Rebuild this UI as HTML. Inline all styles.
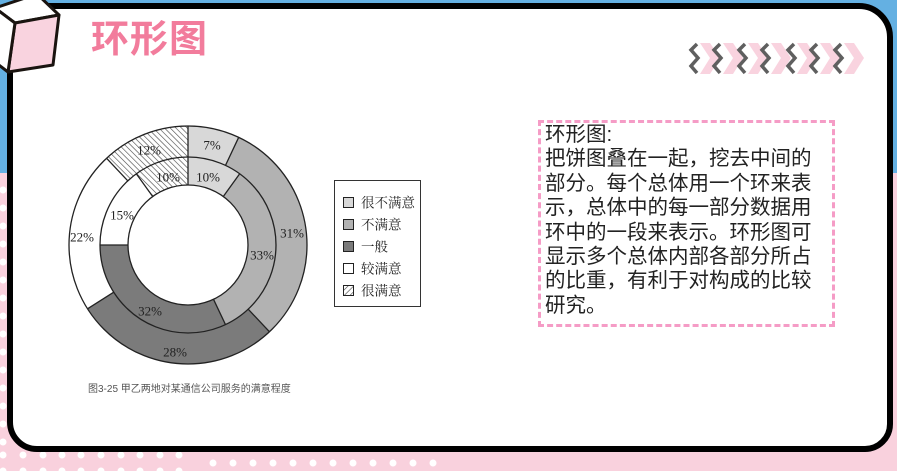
<!DOCTYPE html>
<html><head><meta charset="utf-8"><style>
body{margin:0;width:897px;height:471px;overflow:hidden;position:relative;background:#f9d1dd;font-family:"Liberation Sans","Noto Sans CJK SC",sans-serif}
.blue{position:absolute;left:0;top:0;width:897px;height:173px;background:#64b0e2}
.frame{position:absolute;left:7px;top:3px;width:874px;height:437px;border:6px solid #000;border-radius:26px 34px 28px 30px;background:#fff}
.title{position:absolute;left:91px;top:17px;font-size:38px;font-weight:bold;color:#f27c9c;letter-spacing:1px;line-height:46px}
.box{position:absolute;left:538px;top:120px;width:291px;height:201px;border:3px dashed #f59cc6}
.txt{position:absolute;left:545px;top:123px;font-size:20.5px;line-height:24.4px;color:#222;white-space:nowrap}
.cap{position:absolute;left:88px;top:380px;font-size:10px;color:#555}
</style></head><body>
<div class="blue"></div>
<svg width="897" height="471" style="position:absolute;left:0;top:0">
<g fill="#fff">
<circle cx="3" cy="190" r="3.5"/><circle cx="3" cy="208" r="3.5"/><circle cx="3" cy="226" r="3.5"/><circle cx="3" cy="244" r="3.5"/><circle cx="3" cy="262" r="3.5"/><circle cx="3" cy="280" r="3.5"/><circle cx="3" cy="298" r="3.5"/><circle cx="3" cy="316" r="3.5"/><circle cx="3" cy="334" r="3.5"/><circle cx="3" cy="352" r="3.5"/><circle cx="3" cy="370" r="3.5"/><circle cx="3" cy="388" r="3.5"/><circle cx="3" cy="406" r="3.5"/><circle cx="3" cy="424" r="3.5"/><circle cx="3" cy="442" r="3.5"/>
<circle cx="3" cy="455" r="3.5"/><circle cx="23" cy="455" r="3.5"/><circle cx="43" cy="455" r="3.5"/><circle cx="62" cy="455" r="3.5"/><circle cx="81" cy="455" r="3.5"/><circle cx="101" cy="455" r="3.5"/><circle cx="121" cy="455" r="3.5"/><circle cx="140" cy="455" r="3.5"/><circle cx="160" cy="455" r="3.5"/><circle cx="179" cy="455" r="3.5"/>
<circle cx="3" cy="471" r="3.5"/><circle cx="23" cy="471" r="3.5"/><circle cx="43" cy="471" r="3.5"/><circle cx="62" cy="471" r="3.5"/><circle cx="81" cy="471" r="3.5"/><circle cx="101" cy="471" r="3.5"/><circle cx="121" cy="471" r="3.5"/><circle cx="140" cy="471" r="3.5"/><circle cx="160" cy="471" r="3.5"/><circle cx="179" cy="471" r="3.5"/>
<circle cx="213" cy="463" r="3.5"/><circle cx="233" cy="463" r="3.5"/><circle cx="253" cy="463" r="3.5"/><circle cx="273" cy="463" r="3.5"/><circle cx="293" cy="463" r="3.5"/><circle cx="313" cy="463" r="3.5"/><circle cx="333" cy="463" r="3.5"/><circle cx="353" cy="463" r="3.5"/><circle cx="373" cy="463" r="3.5"/><circle cx="393" cy="463" r="3.5"/><circle cx="413" cy="463" r="3.5"/><circle cx="433" cy="463" r="3.5"/>
</g></svg>
<div class="frame"></div>
<svg width="70" height="80" style="position:absolute;left:0;top:0">
<polygon points="-5,8 37,-6 59,15 15,23" fill="#fff" stroke="#1a1410" stroke-width="3" stroke-linejoin="round"/>
<polygon points="15,23 59,15 53,65 8,72" fill="#f9d3df" stroke="#1a1410" stroke-width="3" stroke-linejoin="round"/>
<polygon points="-5,8 15,23 8,72 -5,62" fill="#fff" stroke="#1a1410" stroke-width="3" stroke-linejoin="round"/>
</svg>
<div class="title">环形图</div>
<svg width="180" height="40" style="position:absolute;left:688px;top:40px">
<g>
<polygon points="12,3 22,3 32,18 22,34 12,34 22,18" fill="#f9d3df" transform="translate(0,0)"/>
<polygon points="12,3 22,3 32,18 22,34 12,34 22,18" fill="#f9d3df" transform="translate(23,0)"/>
<polygon points="12,3 22,3 32,18 22,34 12,34 22,18" fill="#f9d3df" transform="translate(48,0)"/>
<polygon points="12,3 22,3 32,18 22,34 12,34 22,18" fill="#f9d3df" transform="translate(71,0)"/>
<polygon points="12,3 22,3 32,18 22,34 12,34 22,18" fill="#f9d3df" transform="translate(97,0)"/>
<polygon points="12,3 22,3 32,18 22,34 12,34 22,18" fill="#f9d3df" transform="translate(120,0)"/>
<polygon points="12,3 22,3 32,18 22,34 12,34 22,18" fill="#f9d3df" transform="translate(144,0)"/>
</g>
<g fill="none" stroke="#5f5f5f" stroke-width="3.5">
<polyline points="9,4 3,10 10,18 3,26 9,33"/>
<polyline points="9,4 3,10 10,18 3,26 9,33" transform="translate(23,0)"/>
<polyline points="9,4 3,10 10,18 3,26 9,33" transform="translate(48,0)"/>
<polyline points="9,4 3,10 10,18 3,26 9,33" transform="translate(71,0)"/>
<polyline points="9,4 3,10 10,18 3,26 9,33" transform="translate(97,0)"/>
<polyline points="9,4 3,10 10,18 3,26 9,33" transform="translate(120,0)"/>
<polyline points="9,4 3,10 10,18 3,26 9,33" transform="translate(144,0)"/>
</g></svg>
<svg width="897" height="471" style="position:absolute;left:0;top:0;font-family:'Liberation Serif','Noto Serif CJK SC',serif">
<defs><pattern id="h" width="4" height="4" patternUnits="userSpaceOnUse" patternTransform="rotate(45)"><rect width="4" height="4" fill="#fff"/><line x1="0" y1="0" x2="0" y2="4" stroke="#444" stroke-width="1.2"/></pattern></defs>
<g transform="rotate(-90 188 245)" fill="none">
<circle cx="188" cy="245" r="103.5" stroke-width="31" pathLength="100" stroke="#d8d8d8" stroke-dasharray="7 93"/>
<circle cx="188" cy="245" r="103.5" stroke-width="31" pathLength="100" stroke="#b2b2b2" stroke-dasharray="0 7 31 62"/>
<circle cx="188" cy="245" r="103.5" stroke-width="31" pathLength="100" stroke="#7b7b7b" stroke-dasharray="0 38 28 34"/>
<circle cx="188" cy="245" r="103.5" stroke-width="31" pathLength="100" stroke="#fff" stroke-dasharray="0 66 22 12"/>
<circle cx="188" cy="245" r="103.5" stroke-width="31" pathLength="100" stroke="url(#h)" stroke-dasharray="0 88 12 0"/>
<circle cx="188" cy="245" r="74" stroke-width="28" pathLength="100" stroke="#d8d8d8" stroke-dasharray="10 90"/>
<circle cx="188" cy="245" r="74" stroke-width="28" pathLength="100" stroke="#b2b2b2" stroke-dasharray="0 10 33 57"/>
<circle cx="188" cy="245" r="74" stroke-width="28" pathLength="100" stroke="#7b7b7b" stroke-dasharray="0 43 32 25"/>
<circle cx="188" cy="245" r="74" stroke-width="28" pathLength="100" stroke="#fff" stroke-dasharray="0 75 15 10"/>
<circle cx="188" cy="245" r="74" stroke-width="28" pathLength="100" stroke="url(#h)" stroke-dasharray="0 90 10 0"/>
</g>
<g stroke="#222" stroke-width="1.3" fill="none">
<circle cx="188" cy="245" r="119"/><circle cx="188" cy="245" r="88"/><circle cx="188" cy="245" r="60"/>
<line x1="188" y1="185" x2="188" y2="126"/>
<line x1="225.5" y1="165.4" x2="238.7" y2="137.3"/>
<line x1="248.2" y1="309.2" x2="269.5" y2="331.8"/>
<line x1="113.7" y1="292.2" x2="87.5" y2="308.8"/>
<line x1="127.8" y1="180.8" x2="106.5" y2="158.2"/>
<line x1="223.3" y1="196.5" x2="239.7" y2="173.8"/>
<line x1="213.5" y1="299.3" x2="225.5" y2="324.6"/>
<line x1="128" y1="245" x2="100" y2="245"/>
<line x1="152.7" y1="196.5" x2="136.3" y2="173.8"/>
</g>
<g font-size="13" fill="#222" text-anchor="middle" dominant-baseline="central">
<text x="212" y="145">7%</text><text x="149" y="150">12%</text><text x="208" y="177">10%</text><text x="168" y="177">10%</text>
<text x="292" y="233">31%</text><text x="262" y="255">33%</text><text x="122" y="215">15%</text><text x="82" y="237">22%</text>
<text x="150" y="311">32%</text><text x="175" y="352">28%</text>
</g>
<rect x="334.5" y="180.5" width="86" height="126" fill="#fff" stroke="#333"/>
<g stroke="#222" stroke-width="1">
<rect x="343.5" y="197.5" width="10" height="10" fill="#d8d8d8"/>
<rect x="343.5" y="219.5" width="10" height="10" fill="#b2b2b2"/>
<rect x="343.5" y="241.5" width="10" height="10" fill="#7b7b7b"/>
<rect x="343.5" y="263.5" width="10" height="10" fill="#fff"/>
<rect x="343.5" y="285.5" width="10" height="10" fill="url(#h)"/>
</g>
<g font-size="13.5" fill="#222" dominant-baseline="central">
<text x="361" y="203">很不满意</text><text x="361" y="225">不满意</text><text x="361" y="247">一般</text><text x="361" y="269">较满意</text><text x="361" y="291">很满意</text>
</g>
</svg>
<div class="cap">图3-25 甲乙两地对某通信公司服务的满意程度</div>
<div class="box"></div>
<div class="txt">环形图:<br>把饼图叠在一起，挖去中间的<br>部分。每个总体用一个环来表<br>示，总体中的每一部分数据用<br>环中的一段来表示。环形图可<br>显示多个总体内部各部分所占<br>的比重，有利于对构成的比较<br>研究。</div>
</body></html>
